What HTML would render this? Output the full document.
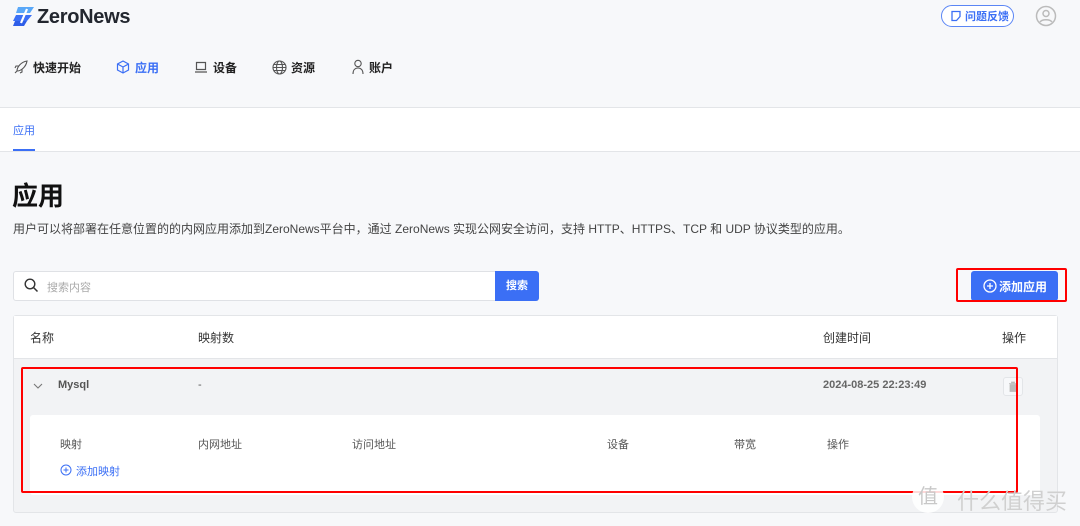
<!DOCTYPE html>
<html><head><meta charset="utf-8"><style>
*{margin:0;padding:0;box-sizing:border-box}
body{width:1080px;height:526px;overflow:hidden;background:#f7f8fa;font-family:"Liberation Sans","Noto Sans CJK SC",sans-serif;color:#1f2329;position:relative}
.a{position:absolute;white-space:nowrap}
.nav{font-size:12px;font-weight:bold;color:#222;top:59px}
.th{font-size:12px;color:#333}
.ih{font-size:11px;color:#555}
</style></head><body>
<!-- logo -->
<svg class="a" style="left:13px;top:7px" width="22" height="19" viewBox="0 0 22 19">
<path d="M5 0h16l-4 6H3z" fill="#5aa8f8"/><path d="M3 8h16l-5 6H0z" fill="#3b6ff5"/><path d="M2 14h12l-3 5H0z" fill="#2e5ee8"/><path d="M14 2L8 16" stroke="#fff" stroke-width="2.2"/>
</svg>
<div class="a" style="left:37px;top:6px;font-size:20px;font-weight:bold;color:#23272f;letter-spacing:-0.3px">ZeroNews</div>
<!-- feedback -->
<div class="a" style="left:941px;top:5px;width:73px;height:22px;border:1.5px solid #5b86f5;border-radius:11px;background:#fff"></div>
<svg class="a" style="left:950px;top:10px" width="12" height="12" viewBox="0 0 12 12"><path d="M2 1.5h8v5l-3.5 4H2z" fill="none" stroke="#3b6ff5" stroke-width="1.3"/></svg>
<div class="a" style="left:965px;top:8px;font-size:11px;color:#3b6ff5;font-weight:bold">问题反馈</div>
<svg class="a" style="left:1035px;top:5px" width="22" height="22" viewBox="0 0 22 22"><circle cx="11" cy="11" r="9.5" fill="none" stroke="#bbb" stroke-width="1.5"/><circle cx="11" cy="8.5" r="3" fill="none" stroke="#bbb" stroke-width="1.5"/><path d="M5 17c2-3 10-3 12 0" fill="none" stroke="#bbb" stroke-width="1.5"/></svg>
<!-- nav -->
<svg class="a" style="left:14px;top:60px" width="14" height="14" viewBox="0 0 14 14"><path d="M3 11c0-4 4-9 10-10-1 6-6 10-10 10zM3 11L1 13M5 6H2l-1 2M8 9v3l-2 1" fill="none" stroke="#555" stroke-width="1.1"/></svg>
<div class="a nav" style="left:33px">快速开始</div>
<svg class="a" style="left:116px;top:60px" width="14" height="14" viewBox="0 0 14 14"><path d="M7 1l5.5 3v6L7 13 1.5 10V4zM1.5 4L7 7l5.5-3M7 7v6" fill="none" stroke="#3b6ff5" stroke-width="1.2"/></svg>
<div class="a nav" style="left:135px;color:#3b6ff5">应用</div>
<svg class="a" style="left:194px;top:60px" width="14" height="14" viewBox="0 0 14 14"><path d="M2.5 2.5h9v7h-9zM1 12h12" fill="none" stroke="#555" stroke-width="1.2"/></svg>
<div class="a nav" style="left:213px">设备</div>
<svg class="a" style="left:272px;top:60px" width="15" height="15" viewBox="0 0 15 15"><circle cx="7.5" cy="7.5" r="6.5" fill="none" stroke="#555" stroke-width="1.1"/><ellipse cx="7.5" cy="7.5" rx="3" ry="6.5" fill="none" stroke="#555" stroke-width="1.1"/><path d="M1 7.5h13M2 4.5h11M2 10.5h11" stroke="#555" stroke-width="1"/></svg>
<div class="a nav" style="left:291px">资源</div>
<svg class="a" style="left:352px;top:59px" width="12" height="16" viewBox="0 0 12 16"><circle cx="6" cy="4.5" r="3.2" fill="none" stroke="#555" stroke-width="1.1"/><path d="M1 15c0-4 2-6 5-6s5 2 5 6" fill="none" stroke="#555" stroke-width="1.1"/></svg>
<div class="a nav" style="left:369px">账户</div>
<!-- tab band -->
<div class="a" style="left:0;top:107px;width:1080px;height:45px;background:#fff;border-top:1px solid #e3e5e8;border-bottom:1px solid #e3e5e8"></div>
<div class="a" style="left:13px;top:122px;font-size:11px;color:#3b6ff5">应用</div>
<div class="a" style="left:13px;top:149px;width:22px;height:2px;background:#3b6ff5"></div>
<!-- title -->
<div class="a" style="left:12px;top:176px;font-size:26px;font-weight:bold;color:#111">应用</div>
<div class="a" style="left:13px;top:220px;font-size:12px;color:#444">用户可以将部署在任意位置的的内网应用添加到ZeroNews平台中，通过 ZeroNews 实现公网安全访问，支持 HTTP、HTTPS、TCP 和 UDP 协议类型的应用。</div>
<!-- search -->
<div class="a" style="left:13px;top:271px;width:526px;height:30px;background:#fff;border:1px solid #dfe1e5;border-radius:3px"></div>
<svg class="a" style="left:24px;top:278px" width="15" height="15" viewBox="0 0 15 15"><circle cx="6" cy="6" r="4.8" fill="none" stroke="#333" stroke-width="1.4"/><path d="M9.5 9.5l4 4" stroke="#333" stroke-width="1.5"/></svg>
<div class="a" style="left:47px;top:279px;font-size:11px;color:#aaa">搜索内容</div>
<div class="a" style="left:495px;top:271px;width:44px;height:30px;background:#3b6ff5;border-radius:0 3px 3px 0;color:#fff;font-size:11px;font-weight:bold;text-align:center;line-height:30px">搜索</div>
<!-- add app -->
<div class="a" style="left:971px;top:271px;width:87px;height:30px;background:#3b6ff5;border-radius:3px"></div>
<svg class="a" style="left:983px;top:279px" width="14" height="14" viewBox="0 0 14 14"><circle cx="7" cy="7" r="6" fill="none" stroke="#fff" stroke-width="1.3"/><path d="M7 4v6M4 7h6" stroke="#fff" stroke-width="1.3"/></svg>
<div class="a" style="left:999px;top:278px;font-size:12px;font-weight:bold;color:#fff">添加应用</div>
<div class="a" style="left:956px;top:268px;width:111px;height:34px;border:2px solid #f00;border-radius:2px"></div>
<!-- table -->
<div class="a" style="left:13px;top:315px;width:1045px;height:198px;background:#f2f3f5;border:1px solid #e3e5e8;border-radius:3px"></div>
<div class="a" style="left:14px;top:316px;width:1043px;height:43px;background:#fff;border-bottom:1px solid #e3e5e8"></div>
<div class="a th" style="left:30px;top:329px">名称</div>
<div class="a th" style="left:198px;top:329px">映射数</div>
<div class="a th" style="left:823px;top:329px">创建时间</div>
<div class="a th" style="left:1002px;top:329px">操作</div>
<svg class="a" style="left:33px;top:382px" width="10" height="8" viewBox="0 0 10 8"><path d="M1 2l4 4 4-4" fill="none" stroke="#777" stroke-width="1.1"/></svg>
<div class="a" style="left:58px;top:379px;font-size:11px;font-weight:bold;color:#555">Mysql</div>
<div class="a" style="left:198px;top:379px;font-size:11px;color:#555">-</div>
<div class="a" style="left:823px;top:379px;font-size:11px;font-weight:bold;color:#666">2024-08-25 22:23:49</div>
<div class="a" style="left:1003px;top:377px;width:20px;height:19px;border:1px solid #e3e5e8;border-radius:3px;background:#f7f8fa"></div>
<svg class="a" style="left:1008px;top:381px" width="10" height="11" viewBox="0 0 10 11"><path d="M1 2.5h8M3.5 2.5V1h3v1.5M2 3.5h6v7H2z" fill="#bbb" stroke="#bbb" stroke-width="0.8"/></svg>
<div class="a" style="left:30px;top:415px;width:1010px;height:80px;background:#fff;border-radius:3px"></div>
<div class="a ih" style="left:60px;top:436px">映射</div>
<div class="a ih" style="left:198px;top:436px">内网地址</div>
<div class="a ih" style="left:352px;top:436px">访问地址</div>
<div class="a ih" style="left:607px;top:436px">设备</div>
<div class="a ih" style="left:734px;top:436px">带宽</div>
<div class="a ih" style="left:827px;top:436px">操作</div>
<svg class="a" style="left:60px;top:464px" width="12" height="12" viewBox="0 0 12 12"><circle cx="6" cy="6" r="5" fill="none" stroke="#3b6ff5" stroke-width="1"/><path d="M6 3.5v5M3.5 6h5" stroke="#3b6ff5" stroke-width="1"/></svg>
<div class="a" style="left:76px;top:463px;font-size:11px;color:#3b6ff5">添加映射</div>
<div class="a" style="left:21px;top:367px;width:997px;height:126px;border:2px solid #f00;border-radius:2px"></div>
<!-- watermark -->
<div class="a" style="left:912px;top:481px;width:32px;height:32px;border-radius:50%;background:rgba(255,255,255,.85);font-size:20px;color:#c8c8c8;text-align:center;line-height:32px">值</div>
<div class="a" style="left:957px;top:484px;font-size:22px;color:#d0d0d0;letter-spacing:0px">什么值得买</div>
</body></html>
